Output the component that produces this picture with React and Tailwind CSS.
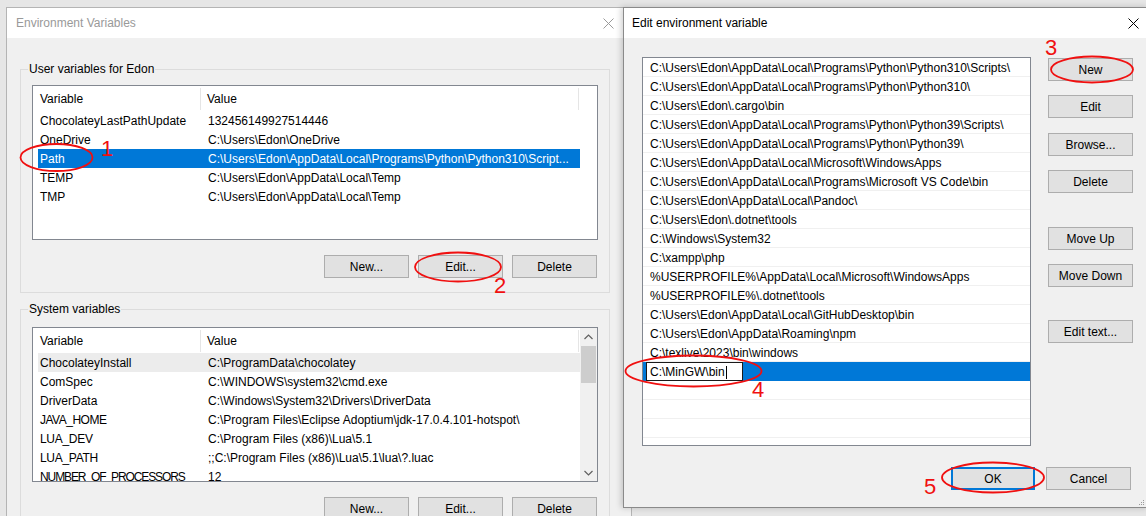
import React from "react";

const userVars = [
  ["ChocolateyLastPathUpdate", "132456149927514446"],
  ["OneDrive", "C:\\Users\\Edon\\OneDrive"],
  ["Path", "C:\\Users\\Edon\\AppData\\Local\\Programs\\Python\\Python310\\Script..."],
  ["TEMP", "C:\\Users\\Edon\\AppData\\Local\\Temp"],
  ["TMP", "C:\\Users\\Edon\\AppData\\Local\\Temp"],
];

const sysVars = [
  ["ChocolateyInstall", "C:\\ProgramData\\chocolatey", ""],
  ["ComSpec", "C:\\WINDOWS\\system32\\cmd.exe", ""],
  ["DriverData", "C:\\Windows\\System32\\Drivers\\DriverData", ""],
  ["JAVA_HOME", "C:\\Program Files\\Eclipse Adoptium\\jdk-17.0.4.101-hotspot\\", "tracking-[-0.5px]"],
  ["LUA_DEV", "C:\\Program Files (x86)\\Lua\\5.1", "tracking-[-0.3px]"],
  ["LUA_PATH", ";;C:\\Program Files (x86)\\Lua\\5.1\\lua\\?.luac", "tracking-[-0.3px]"],
  ["NUMBER_OF_PROCESSORS", "12", "tracking-[-1.1px]"],
];

const paths = [
  "C:\\Users\\Edon\\AppData\\Local\\Programs\\Python\\Python310\\Scripts\\",
  "C:\\Users\\Edon\\AppData\\Local\\Programs\\Python\\Python310\\",
  "C:\\Users\\Edon\\.cargo\\bin",
  "C:\\Users\\Edon\\AppData\\Local\\Programs\\Python\\Python39\\Scripts\\",
  "C:\\Users\\Edon\\AppData\\Local\\Programs\\Python\\Python39\\",
  "C:\\Users\\Edon\\AppData\\Local\\Microsoft\\WindowsApps",
  "C:\\Users\\Edon\\AppData\\Local\\Programs\\Microsoft VS Code\\bin",
  "C:\\Users\\Edon\\AppData\\Local\\Pandoc\\",
  "C:\\Users\\Edon\\.dotnet\\tools",
  "C:\\Windows\\System32",
  "C:\\xampp\\php",
  "%USERPROFILE%\\AppData\\Local\\Microsoft\\WindowsApps",
  "%USERPROFILE%\\.dotnet\\tools",
  "C:\\Users\\Edon\\AppData\\Local\\GitHubDesktop\\bin",
  "C:\\Users\\Edon\\AppData\\Roaming\\npm",
  "C:\\texlive\\2023\\bin\\windows",
];

function CloseX({ color }) {
  return (
    <svg width="11" height="11" viewBox="0 0 11 11">
      <path d="M0.5 0.5 L10.5 10.5 M10.5 0.5 L0.5 10.5" stroke={color} strokeWidth="1" />
    </svg>
  );
}

function Btn({ children, className = "" }) {
  return (
    <div
      className={
        "h-[23px] w-[85px] bg-[#e1e1e1] border border-[#adadad] flex items-center justify-center leading-none " +
        className
      }
    >
      {children}
    </div>
  );
}

function Header() {
  return (
    <div className="h-[25px] flex items-center shrink-0">
      <div className="w-[168px] h-[22px] flex items-center pl-[7px] border-r border-[#e5e5e5]">Variable</div>
      <div className="w-[378px] h-[22px] flex items-center pl-[6px] border-r border-[#e5e5e5]">Value</div>
    </div>
  );
}

function VarRow({ name, value, bg, nameCls = "" }) {
  return (
    <div className={"ml-[5px] w-[542px] h-[19px] shrink-0 flex items-center whitespace-nowrap overflow-hidden " + bg}>
      <div className={"w-[170px] pl-[2px] shrink-0 overflow-hidden " + nameCls}>{name}</div>
      <div className="shrink-0">{value}</div>
    </div>
  );
}

function GroupBox({ title, h, pt, children }) {
  return (
    <div className={"relative ml-[13px] w-[590px] border border-[#dcdcdc] " + h + " " + pt}>
      <div className="absolute -top-[8px] left-[7px] px-[1px] bg-[#f0f0f0] leading-[14px]">{title}</div>
      <div className="pl-[11px]">{children}</div>
    </div>
  );
}

export default function App() {
  return (
    <div className="relative w-[1146px] h-[516px] overflow-hidden bg-[#e6e6e6] text-[12px] text-black font-['Liberation_Sans',Arial,sans-serif]">
      {/* Left window */}
      <div className="absolute left-[6px] top-[7px] w-[626px] h-[520px] border border-[#b4b4b4] bg-[#f0f0f0] flex flex-col">
        <div className="h-[30px] bg-white flex items-center justify-between pl-[9px] pr-[17px] shrink-0">
          <span className="text-[#999999]">Environment Variables</span>
          <CloseX color="#9a9a9a" />
        </div>
        <div className="pt-[31px] flex flex-col">
          <GroupBox title="User variables for Edon" h="h-[224px]" pt="pt-[15px]">
            <div className="w-[566px] h-[155px] border border-[#828790] bg-white flex flex-col">
              <Header />
              {userVars.map(([n, v], i) => (
                <VarRow key={n} name={n} value={v} bg={i === 2 ? "bg-[#0078d7] text-white" : ""} />
              ))}
            </div>
            <div className="w-[566px] flex justify-end gap-[9px] pr-[1px] mt-[15px]">
              <Btn>New...</Btn>
              <Btn>Edit...</Btn>
              <Btn>Delete</Btn>
            </div>
          </GroupBox>
          <div className="h-[16px]" />
          <GroupBox title="System variables" h="h-[230px]" pt="pt-[17px]">
            <div className="w-[566px] h-[155px] border border-[#828790] bg-white flex overflow-hidden">
              <div className="w-[547px] flex flex-col overflow-hidden">
                <Header />
                {sysVars.map(([n, v, c], i) => (
                  <VarRow key={n} name={n} value={v} nameCls={c} bg={i === 0 ? "bg-[#ececec]" : ""} />
                ))}
              </div>
              <div className="w-[17px] bg-[#f0f0f0] flex flex-col items-center">
                <div className="h-[17px] flex items-center justify-center w-full">
                  <svg width="9" height="6" viewBox="0 0 9 6">
                    <path d="M0.5 5 L4.5 1 L8.5 5" fill="none" stroke="#606060" strokeWidth="1.2" />
                  </svg>
                </div>
                <div className="mt-[1px] w-[15px] h-[37px] bg-[#cdcdcd]" />
                <div className="flex-1" />
                <div className="h-[17px] flex items-center justify-center w-full">
                  <svg width="9" height="6" viewBox="0 0 9 6">
                    <path d="M0.5 1 L4.5 5 L8.5 1" fill="none" stroke="#606060" strokeWidth="1.2" />
                  </svg>
                </div>
              </div>
            </div>
            <div className="w-[566px] flex justify-end gap-[9px] pr-[1px] mt-[15px]">
              <Btn>New...</Btn>
              <Btn>Edit...</Btn>
              <Btn>Delete</Btn>
            </div>
          </GroupBox>
        </div>
      </div>

      {/* Right window */}
      <div className="absolute left-[623px] top-[7px] w-[526px] h-[501px] border border-[#8a8a8a] bg-[#f0f0f0] z-10 flex flex-col shadow-[-2px_0_6px_rgba(0,0,0,0.18)]">
        <div className="h-[30px] bg-white flex items-center justify-between pl-[8px] pr-[9px] shrink-0">
          <span>Edit environment variable</span>
          <CloseX color="#000000" />
        </div>
        <div className="flex">
          <div className="ml-[18px] mt-[19px] w-[389px] h-[389px] border border-[#828790] bg-white overflow-hidden flex flex-col">
            {paths.map((p) => (
              <div key={p} className="h-[19px] shrink-0 border-b border-[#f0f0f0] pl-[7px] pt-[2px] flex items-center whitespace-nowrap">
                {p}
              </div>
            ))}
            <div className="h-[19px] shrink-0 bg-[#0078d7] flex items-center">
              <div className="ml-[3px] w-[97px] h-[19px] bg-white border border-[#1a1a1a] flex items-center pl-[3px] pt-[1px]">
                <span>C:\MinGW\bin</span>
                <span className="w-px h-[13px] bg-black ml-[1px]" />
              </div>
            </div>
            {[0, 1, 2, 3].map((i) => (
              <div key={i} className="h-[19px] shrink-0 border-b border-[#f0f0f0]" />
            ))}
          </div>
          <div className="ml-[17px] mt-[20px] flex flex-col">
            <Btn>New</Btn>
            <Btn className="mt-[14px]">Edit</Btn>
            <Btn className="mt-[15px]">Browse...</Btn>
            <Btn className="mt-[14px]">Delete</Btn>
            <Btn className="mt-[34px]">Move Up</Btn>
            <Btn className="mt-[14px]">Move Down</Btn>
            <Btn className="mt-[33px]">Edit text...</Btn>
          </div>
        </div>
        <div className="mt-[21px] flex justify-end gap-[11px] pr-[17px]">
          <div className="h-[23px] w-[84px] bg-[#e1e1e1] border-2 border-[#0078d7] flex items-center justify-center">OK</div>
          <Btn className="w-[84px]">Cancel</Btn>
        </div>
        <div className="flex-1" />
        <div className="flex justify-end pr-[3px] pb-[1px]">
          <svg width="7" height="7" viewBox="0 0 7 7">
            <rect x="5" y="1" width="1" height="1" fill="#9a9a9a" />
            <rect x="3" y="3" width="1" height="1" fill="#9a9a9a" />
            <rect x="5" y="3" width="1" height="1" fill="#9a9a9a" />
            <rect x="1" y="5" width="1" height="1" fill="#9a9a9a" />
            <rect x="3" y="5" width="1" height="1" fill="#9a9a9a" />
            <rect x="5" y="5" width="1" height="1" fill="#9a9a9a" />
          </svg>
        </div>
      </div>

      {/* Annotations */}
      <svg className="absolute inset-0 z-20 pointer-events-none" width="1146" height="516" viewBox="0 0 1146 516">
        <g fill="none" stroke="#f01010" strokeWidth="1.8">
          <ellipse cx="56.5" cy="157.5" rx="36" ry="13.5" />
          <ellipse cx="458" cy="267" rx="43" ry="14.5" />
          <ellipse cx="1092" cy="69.5" rx="41" ry="13" />
          <ellipse cx="693.5" cy="371" rx="68" ry="15.5" />
          <ellipse cx="993" cy="477.5" rx="51" ry="15" />
        </g>
      </svg>
      <div className="absolute z-20 left-[101px] top-[138px] text-[22px] leading-[22px] text-[#f01010]">1</div>
      <div className="absolute z-20 left-[494px] top-[275px] text-[22px] leading-[22px] text-[#f01010]">2</div>
      <div className="absolute z-20 left-[1045px] top-[37px] text-[22px] leading-[22px] text-[#f01010]">3</div>
      <div className="absolute z-20 left-[752px] top-[379px] text-[22px] leading-[22px] text-[#f01010]">4</div>
      <div className="absolute z-20 left-[924px] top-[476px] text-[22px] leading-[22px] text-[#f01010]">5</div>
    </div>
  );
}
